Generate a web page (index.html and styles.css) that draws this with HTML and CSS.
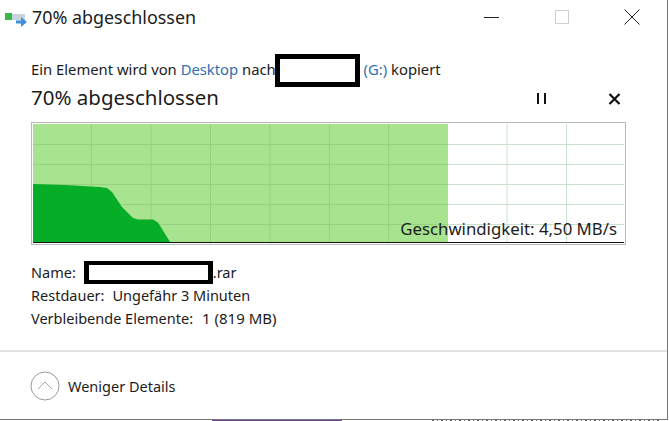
FILE: index.html
```html
<!DOCTYPE html>
<html lang="de">
<head>
<meta charset="utf-8">
<title>70% abgeschlossen</title>
<link rel="stylesheet" href="styles.css">
</head>
<body>
<div class="window">
  <header class="titlebar">
    <svg class="app-icon" width="24" height="20" viewBox="0 0 24 20">
      <rect x="0" y="3" width="7" height="7" fill="#3cb54a"/>
      <rect x="7" y="4" width="13" height="6" fill="#c9d3dc"/>
      <path d="M11 10.500h5V7l6 5-6 5v-3.500h-5z" fill="#3f8fdc"/>
    </svg>
    <span class="window-title">70% abgeschlossen</span>
    <div class="controls">
      <svg width="16" height="16" viewBox="0 0 16 16"><path d="M0 8.500h15" stroke="#222" fill="none"/></svg>
      <svg width="16" height="16" viewBox="0 0 16 16"><rect x="1.500" y="1.500" width="13" height="13" fill="none" stroke="#cfcfcf"/></svg>
      <svg width="16" height="16" viewBox="0 0 16 16"><path d="M.5.500l15 15M15.500.500l-15 15" stroke="#222" fill="none"/></svg>
    </div>
  </header>
  <main class="content">
    <p class="message">Ein Element wird von <a class="link">Desktop</a> nach<span class="redact redact-target"></span> <a class="link">(G:)</a> kopiert</p>
    <div class="status">
      <h1 class="percent">70% abgeschlossen</h1>
      <div class="actions">
        <svg width="12" height="12" viewBox="0 0 12 12"><path d="M0 0h2v11H0zM7 0h2v11H7z" fill="#111"/></svg>
        <svg width="13" height="12" viewBox="0 0 13 12"><path d="M1.500 1l10 10M11.500 1l-10 10" stroke="#111" stroke-width="2.200" fill="none"/></svg>
      </div>
    </div>
    <div class="chart">
      <svg class="chart-graph" width="595" height="123" viewBox="31 123 595 123">
        <rect x="31.500" y="123.500" width="594" height="122" fill="#fff" stroke="#b8b8b8"/>
        <rect x="33" y="125" width="415" height="119" fill="#a8e38f"/>
        <path d="M507 125v119M566.500 125v119M33 145.500h591M33 165.500h591M33 185.500h591M33 205.500h591M33 225.500h591" stroke="#c9e2cf" fill="none"/>
        <path d="M91.500 125v119M151 125v119M210.500 125v119M270 125v119M329.500 125v119M388.500 125v119M33 145.500h415M33 165.500h415M33 185.500h415M33 205.500h415M33 225.500h415" stroke="#97d080" fill="none"/>
        <path d="M33 185l32 1 35 2 7 1 5 4 10 15 11 11 5 1.500h15l5 3 5 8 7 11.500H33z" fill="#06ae27"/>
        <path d="M33 243.500h591" stroke="#111" fill="none"/>
      </svg>
      <span class="speed">Geschwindigkeit: 4,50 MB/s</span>
    </div>
    <dl class="details">
      <div class="row"><dt>Name:</dt><dd><span class="redact redact-name"></span>.rar</dd></div>
      <div class="row"><dt>Restdauer:</dt><dd>Ungefähr 3 Minuten</dd></div>
      <div class="row"><dt>Verbleibende Elemente:</dt><dd class="count">1 (819 MB)</dd></div>
    </dl>
  </main>
  <footer class="footer">
    <svg width="30" height="30" viewBox="0 0 30 30"><circle cx="15" cy="15" r="14" fill="none" stroke="#9a9a9a"/><path d="M8 18l7-7 7 7" fill="none" stroke="#a8a8a8"/></svg>
    <span class="toggle-label">Weniger Details</span>
  </footer>
</div>
<div class="behind">
  <span class="behind-purple"></span>
  <span class="behind-text"></span>
</div>
</body>
</html>
```
FILE: styles.css
```css
* { box-sizing: border-box; }
html, body { margin: 0; height: 100%; background: #fff; overflow: hidden; }
body {
  width: 669px;
  height: 421px;
  font-family: "Noto Sans", "Open Sans", sans-serif;
  color: #1c1c1c;
}
.window {
  width: 668px;
  height: 420px;
  border-right: 1px solid #777;
  border-bottom: 1px solid #777;
  display: flex;
  flex-direction: column;
}
.titlebar {
  height: 36px;
  display: flex;
  align-items: center;
  padding: 0 27px 0 5px;
}
.app-icon { flex: none; margin-right: 3px; margin-top: 4px; overflow: visible; }
.window-title { font-size: 17.900px; margin-top: -3px; }
.controls {
  margin-left: auto;
  display: flex;
  gap: 54px;
  margin-top: -3px;
}
.content {
  flex: 1;
  padding: 22px 42px 0 31px;
}
.message {
  margin: 0;
  font-size: 14.800px;
  line-height: 22px;
  white-space: nowrap;
}
.link { color: #2f6fb0; }
.redact {
  display: inline-block;
  border: 5px solid #000;
  background: #fff;
  vertical-align: middle;
}
.redact-target {
  width: 85px;
  height: 33px;
  margin: -8px 0 -6px -1px;
}
.redact-name {
  width: 129px;
  height: 23px;
  margin: -6px 0 -4px 0;
  border-width: 4px 5px;
}
.status {
  display: flex;
  align-items: center;
  height: 28px;
  margin-top: 2px;
}
.percent {
  margin: 0;
  font-size: 20.500px;
  font-weight: 400;
}
.actions {
  margin-left: auto;
  margin-right: 4px;
  margin-top: 5px;
  display: flex;
  gap: 59px;
  align-items: center;
}
.chart {
  position: relative;
  width: 595px;
  height: 123px;
  margin-top: 11px;
}
.chart-graph { display: block; }
.speed {
  position: absolute;
  right: 9px;
  bottom: 3px;
  font-size: 16.800px;
  line-height: 26px;
  white-space: nowrap;
}
.details {
  margin: 16px 0 0;
  font-size: 14.500px;
  line-height: 23.400px;
}
.row { display: flex; gap: 8px; white-space: nowrap; }
dt, dd { margin: 0; }
.count { font-size: 15px; margin-left: 1px; }
.footer {
  flex: none;
  height: 69px;
  border-top: 2px solid #e3e3e3;
  display: flex;
  align-items: center;
  gap: 8px;
  padding: 0 0 0 30px;
}
.toggle-label { font-size: 14.500px; }
.behind {
  height: 1px;
  display: flex;
  padding-left: 212px;
}
.behind-purple { width: 130px; background: #6b3f94; }
.behind-text {
  width: 228px;
  margin-left: 90px;
  background: repeating-linear-gradient(90deg, #555 0 2px, #fff 2px 5px, #777 5px 6px, #fff 6px 9px);
}
```
